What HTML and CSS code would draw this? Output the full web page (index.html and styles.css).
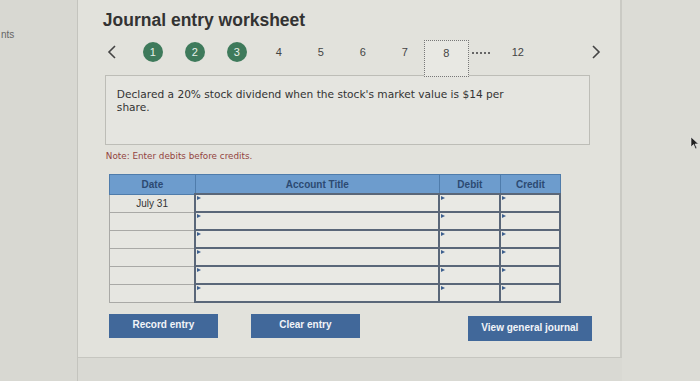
FILE: index.html
```html
<!DOCTYPE html>
<html lang="en">
<head>
  <meta charset="UTF-8" />
  <meta name="viewport" content="width=device-width, initial-scale=1.0" />
  <title>Journal entry worksheet</title>
  <link rel="stylesheet" href="styles.css">
</head>
<body>

  <div class="tela">

    <!-- Barra lateral -->
    <aside class="lateral">
      <span class="pontos">nts</span>
    </aside>

    <main class="painel">
      <h1>Journal entry worksheet</h1>

      <nav class="passos">
        <span class="passo seta">
          <svg width="10" height="16" viewBox="0 0 10 16"><polyline points="8,2 2,8 8,14" fill="none" stroke="#444" stroke-width="1.6"/></svg>
        </span>
        <span class="passo"><span class="feito">1</span></span>
        <span class="passo"><span class="feito">2</span></span>
        <span class="passo"><span class="feito">3</span></span>
        <span class="passo">4</span>
        <span class="passo">5</span>
        <span class="passo">6</span>
        <span class="passo">7</span>
        <span class="atual">8</span>
        <span class="reticencias"></span>
        <span class="passo ultimo">12</span>
        <span class="passo seta proxima">
          <svg width="10" height="16" viewBox="0 0 10 16"><polyline points="2,2 8,8 2,14" fill="none" stroke="#444" stroke-width="1.6"/></svg>
        </span>
      </nav>

      <div class="enunciado">
        Declared a 20% stock dividend when the stock's market value is $14 per share.
      </div>

      <p class="nota">Note: Enter debits before credits.</p>

      <table class="lancamentos">
        <thead>
          <tr>
            <th class="col-data">Date</th>
            <th class="col-conta">Account Title</th>
            <th class="col-valor">Debit</th>
            <th class="col-valor2">Credit</th>
          </tr>
        </thead>
        <tbody>
          <tr><td class="data">July 31</td><td class="campo"></td><td class="campo"></td><td class="campo"></td></tr>
          <tr><td class="data"></td><td class="campo"></td><td class="campo"></td><td class="campo"></td></tr>
          <tr><td class="data"></td><td class="campo"></td><td class="campo"></td><td class="campo"></td></tr>
          <tr><td class="data"></td><td class="campo"></td><td class="campo"></td><td class="campo"></td></tr>
          <tr><td class="data"></td><td class="campo"></td><td class="campo"></td><td class="campo"></td></tr>
          <tr><td class="data"></td><td class="campo"></td><td class="campo"></td><td class="campo"></td></tr>
        </tbody>
      </table>

      <div class="acoes">
        <button class="botao">Record entry</button>
        <button class="botao">Clear entry</button>
        <button class="botao diario">View general journal</button>
      </div>
    </main>

    <div class="borda">
      <svg class="cursor" width="10" height="14" viewBox="0 0 10 14"><polygon points="1,1 1,11 3.5,8.5 5.5,13 7,12.3 5,8 8.5,8" fill="#222" stroke="#eee" stroke-width="0.6"/></svg>
    </div>

  </div>

</body>
</html>
```

FILE: styles.css
```css
body {
  margin: 0;
  font-family: "Liberation Sans", Arial, sans-serif;
  background-color: #d9d9d3;
  color: #333;
  overflow: hidden;
}

.tela {
  display: flex;
  width: 700px;
  height: 381px;
}

.lateral {
  width: 78px;
  border-right: 1px solid #c4c4be;
  background-color: #d8d8d2;
}

.pontos {
  display: block;
  margin-top: 29px;
  margin-left: 1px;
  font-size: 10px;
  color: #666;
}

.painel {
  width: 538px;
  height: 357px;
  padding-left: 12px;
  background-color: #e2e2dc;
  border-right: 2px solid #cacac4;
  border-bottom: 1px solid #c6c6c0;
}

h1 {
  margin: 10px 0 0 13px;
  font-size: 17.5px;
  line-height: 20px;
  color: #333;
}

.passos {
  display: flex;
  align-items: flex-start;
  height: 35px;
  margin-top: 10px;
  font-size: 11px;
  color: #444;
}

.passo {
  display: flex;
  align-items: center;
  justify-content: center;
  width: 42px;
  height: 24px;
}

.seta {
  padding-left: 2px;
  box-sizing: border-box;
}

.feito {
  display: flex;
  align-items: center;
  justify-content: center;
  width: 20px;
  height: 20px;
  border-radius: 50%;
  background-color: #3e7a5b;
  color: #e8f0ea;
}

.atual {
  display: flex;
  justify-content: center;
  width: 43px;
  height: 35px;
  margin-left: -2px;
  line-height: 24px;
  border: 1px dotted #777;
  background-color: #e8e8e3;
}

.reticencias {
  width: 20px;
  height: 24px;
  margin-left: 2px;
  background-image: radial-gradient(circle, #666 1px, transparent 1.3px);
  background-size: 4px 4px;
  background-position: 0 11px;
  background-repeat: repeat-x;
}

.ultimo {
  width: 54px;
}

.proxima {
  width: 20px;
  margin-left: 40px;
}

.enunciado {
  width: 400px;
  height: 56px;
  margin-left: 15px;
  padding: 12px 72px 0 11px;
  background-color: #e5e5e0;
  border: 1px solid #bdbdb7;
  font-family: "DejaVu Sans", Verdana, sans-serif;
  font-size: 10.6px;
  line-height: 13px;
  color: #333;
}

.nota {
  margin: 6px 0 0 16px;
  font-family: "DejaVu Sans", Verdana, sans-serif;
  font-size: 8.8px;
  line-height: 11px;
  color: #93443f;
}

.lancamentos {
  margin: 12px 0 0 19px;
  border-collapse: collapse;
  table-layout: fixed;
  width: 447px;
  font-size: 10px;
}

.lancamentos th {
  height: 18px;
  padding: 0;
  background-color: #6d9ccd;
  border: 1px solid #4f7cab;
  color: #2c4a72;
  font-weight: bold;
}

.col-data { width: 85px; }
.col-conta { width: 243px; }
.col-valor { width: 60px; }
.col-valor2 { width: 59px; }

.lancamentos td {
  height: 16px;
  padding: 0;
}

.data {
  border: 1px solid #a9a9a6;
  background-color: #e6e6e1;
  text-align: center;
  color: #333;
}

.campo {
  position: relative;
  border: 2px solid #5a6779;
  background-color: #e9e9e4;
}

.campo::before {
  content: "";
  position: absolute;
  top: 1px;
  left: 1px;
  border-left: 4px solid #3d5f8e;
  border-top: 2px solid transparent;
  border-bottom: 2px solid transparent;
}

.acoes {
  display: flex;
  align-items: flex-start;
  margin: 11px 0 0 19px;
}

.botao {
  width: 109px;
  height: 24px;
  padding: 0 0 3px;
  background-color: #41689a;
  color: #f2f4f8;
  border: none;
  font-family: "Liberation Sans", Arial, sans-serif;
  font-size: 10px;
  font-weight: bold;
  cursor: pointer;
}

.botao + .botao {
  margin-left: 33px;
}

.diario {
  width: 124px;
  height: 25px;
  margin-top: 2px;
}

.botao.diario {
  margin-left: 108px;
}

.borda {
  flex: 1;
  background-color: #dcdcd6;
}

.cursor {
  display: block;
  margin: 136px 0 0 68px;
}
```
